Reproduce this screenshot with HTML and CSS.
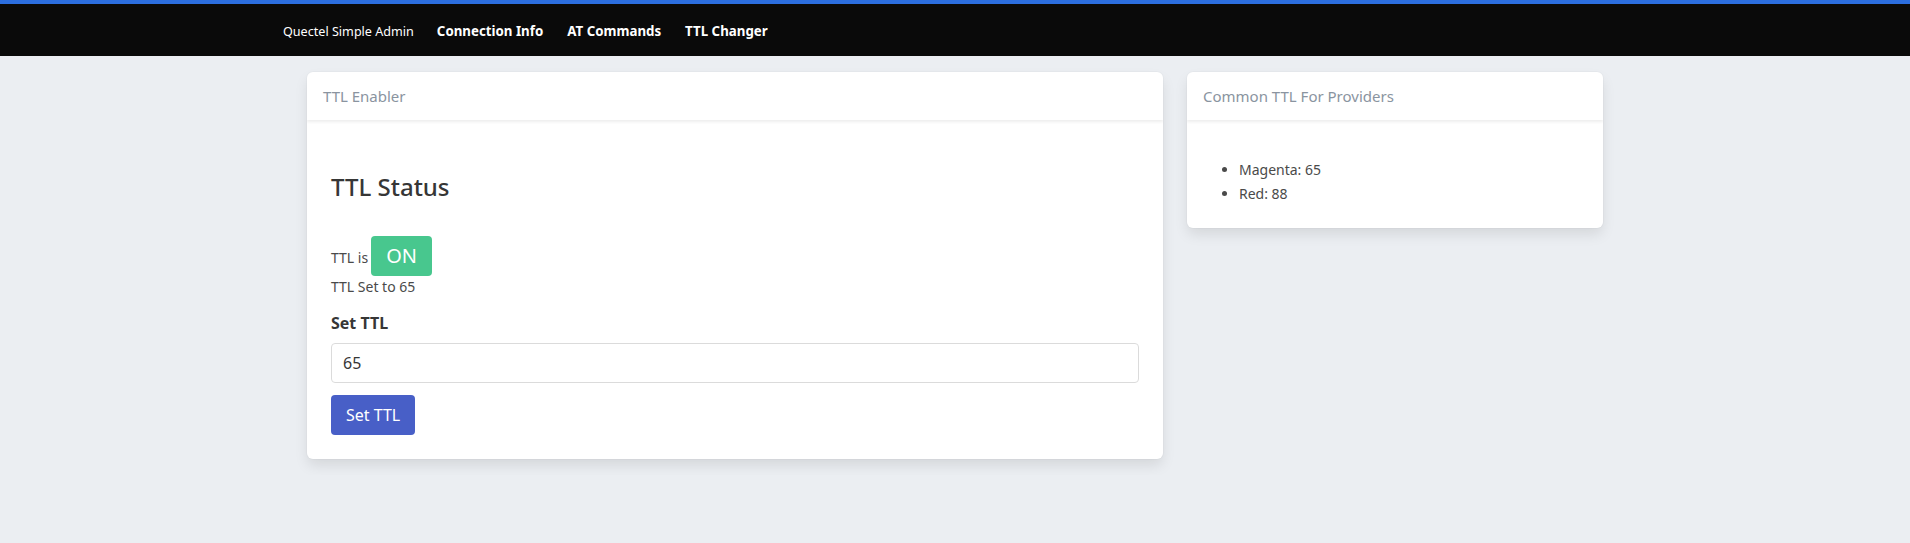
FILE: index.html
```html
<!DOCTYPE html>
<html lang="en">
<head>
<meta charset="utf-8">
<title>TTL Changer - Quectel Simple Admin</title>
<link rel="stylesheet" href="styles.css">
</head>
<body>
<nav class="navbar">
  <div class="nav-inner">
    <a class="brand" href="#">Quectel Simple Admin</a>
    <a class="nav-link" href="#">Connection Info</a>
    <a class="nav-link" href="#">AT Commands</a>
    <a class="nav-link" href="#">TTL Changer</a>
  </div>
</nav>
<main class="container">
  <div class="columns">
    <section class="card">
      <header class="card-header">TTL Enabler</header>
      <div class="card-body">
        <h3 class="title">TTL Status</h3>
        <div class="status-line">
          <span class="status-text">TTL is</span>
          <span class="tag-on">ON</span>
        </div>
        <p class="status-value">TTL Set to 65</p>
        <label class="label" for="ttl">Set TTL</label>
        <input class="input" id="ttl" type="text" value="65">
        <button class="button" type="button">Set TTL</button>
      </div>
    </section>
    <section class="card card-side">
      <header class="card-header">Common TTL For Providers</header>
      <div class="card-body">
        <ul class="providers">
          <li>Magenta: 65</li>
          <li>Red: 88</li>
        </ul>
      </div>
    </section>
  </div>
</main>
</body>
</html>
```

FILE: styles.css
```css
* { box-sizing: border-box; }

html, body {
  margin: 0;
  padding: 0;
}

body {
  background: #ebeef2;
  font-family: "Noto Sans", "Open Sans", sans-serif;
  color: #4a4a4a;
  font-size: 14px;
}

.navbar {
  background: #0a0a0a;
  border-top: 4px solid #2c6edf;
  height: 56px;
}

.nav-inner {
  max-width: 1344px;
  margin: 0 auto;
  height: 52px;
  display: flex;
  align-items: center;
  padding-top: 2px;
}

.brand,
.nav-link {
  color: #fff;
  text-decoration: none;
  line-height: 21px;
}

.brand {
  font-size: 12.6px;
  font-weight: 400;
  margin-right: 23px;
}

.nav-link {
  font-size: 13.3px;
  font-weight: 700;
  margin-right: 24px;
}

.container {
  max-width: 1320px;
  margin: 0 auto;
  padding: 16px 12px;
}

.columns {
  display: grid;
  grid-template-columns: 856px 416px;
  gap: 24px;
  align-items: start;
}

.card {
  background: #fff;
  border-radius: 6px;
  box-shadow: 0 0.5em 1em -0.125em rgba(10, 10, 10, 0.1), 0 0 0 1px rgba(10, 10, 10, 0.02);
  overflow: hidden;
}

.card-header {
  height: 48px;
  padding: 12px 16px;
  font-size: 15px;
  line-height: 24px;
  color: #8a94a0;
  box-shadow: 0 2px 3px rgba(10, 10, 10, 0.07);
  position: relative;
}

.card-body {
  padding: 24px;
}

.title {
  margin: 29px 0 36px;
  font-size: 24px;
  line-height: 27px;
  font-weight: 500;
  color: #363636;
}

.status-line {
  display: flex;
  align-items: baseline;
}

.status-text {
  line-height: 21px;
  margin-right: 3px;
}

.tag-on {
  display: inline-flex;
  align-items: center;
  height: 40px;
  padding: 0 15px;
  background: #48c78e;
  color: #fff;
  font-size: 20px;
  line-height: 30px;
  border-radius: 4px;
}

.status-value {
  margin: 0;
  line-height: 21px;
}

.label {
  display: block;
  margin: 14px 0 8px;
  font-size: 16px;
  line-height: 24px;
  font-weight: 700;
  color: #363636;
}

.input {
  display: block;
  width: 100%;
  height: 40px;
  padding: 0 11px;
  border: 1px solid #dbdbdb;
  border-radius: 4px;
  font-family: inherit;
  font-size: 16px;
  color: #363636;
  background: #fff;
  outline: none;
}

.button {
  display: block;
  margin-top: 12px;
  height: 40px;
  padding: 0 15px;
  border: none;
  border-radius: 4px;
  background: #485fc7;
  color: #fff;
  font-family: inherit;
  font-size: 16px;
  cursor: pointer;
}

.providers {
  margin: 15px 0 0;
  padding-left: 28px;
  list-style: disc;
}

.providers li {
  line-height: 21px;
}

.providers li + li {
  margin-top: 3px;
}
```
